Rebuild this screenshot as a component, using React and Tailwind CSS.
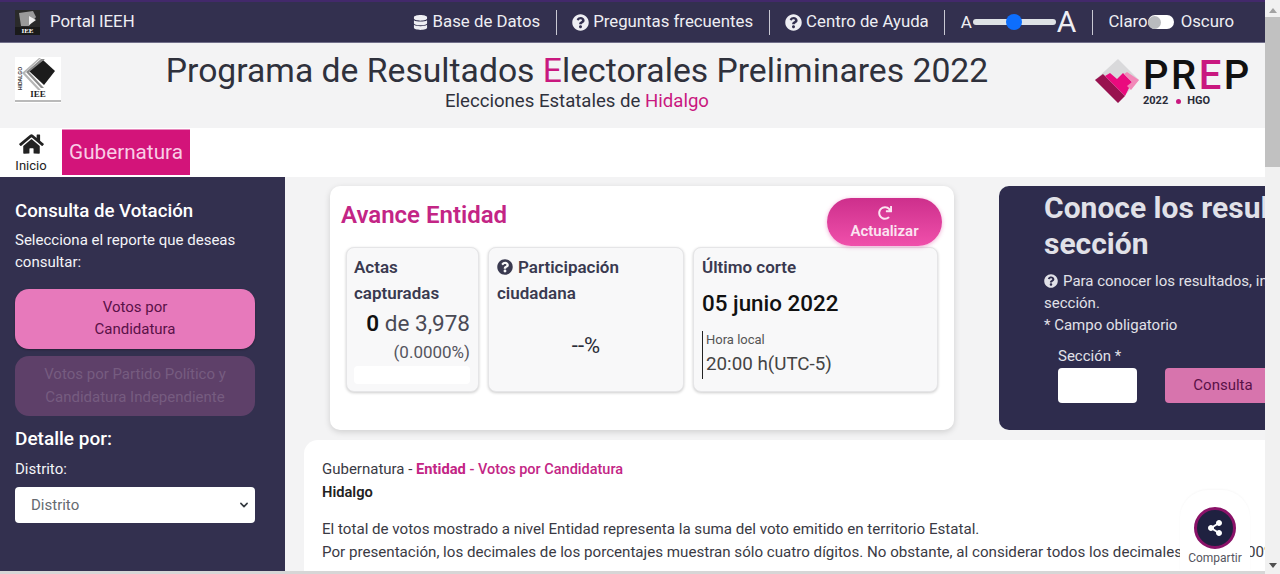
import React from "react";
import { FaDatabase, FaQuestionCircle, FaHome, FaShareAlt, FaRedo } from "react-icons/fa";

const Sep = () => <span className="w-px h-[25px] bg-[#c9c8d3] mx-[15.5px]" />;

const StatBox = ({ className, children }) => (
  <div className={`bg-[#f8f8f9] border border-[#e5e5e7] rounded-lg shadow-[0_1px_3px_rgba(0,0,0,0.2)] h-[145px] pt-[6px] ${className}`}>
    {children}
  </div>
);

const IeeLogo = ({ className }) => (
  <svg viewBox="0 0 46 46" className={className}>
    <rect width="46" height="46" fill="#ffffff" />
    <path d="M14 14 L28 3 L40 14 L29 28 Z" fill="#1c1c1c" />
    <path d="M11 15 L26 2 L30 2 L14 15 L29 31 L26 31 Z" fill="#8a8a8a" />
    <path d="M7 16 L24 1 L26 1 L10 16 L26 33 L23 33 Z" fill="#b5b5b5" />
    <rect x="10" y="33" width="30" height="8" fill="#ffffff" />
    <text x="23" y="40" textAnchor="middle" fontSize="9" fontWeight="700" fontFamily="Liberation Serif, serif" fill="#222222">IEE</text>
    <text x="0" y="0" transform="translate(7 33) rotate(-90)" fontSize="5" fontWeight="700" fontFamily="Liberation Sans, sans-serif" fill="#333333">HIDALGO</text>
    <rect x="0" y="43.5" width="46" height="1" fill="#777777" />
  </svg>
);

const TopNav = () => (
  <div className="h-[43px] shrink-0 bg-[#33304f] border-t-2 border-t-[#43296b] border-b border-b-[#716f8a] flex items-center pl-[15px] text-[#eeeef3] text-[16.8px]">
    <div className="w-[25px] h-[25px] bg-[#1a1a1a] flex flex-col items-center justify-end overflow-hidden">
      <svg viewBox="0 0 25 17" className="w-[25px] h-[17px]">
        <rect width="25" height="17" fill="#2a2a2a" />
        <path d="M4 3 L18 1 L21 7 L14 16 L6 16 Z" fill="#9a9a9a" />
        <path d="M14 6 L21 10 L14 15 Z" fill="#eeeeee" />
      </svg>
      <span className="text-[7px] leading-[8px] font-bold text-white font-['Liberation_Serif',serif]">IEE</span>
    </div>
    <span className="ml-[10px]">Portal IEEH</span>
    <div className="ml-auto flex items-center pr-[31px]">
      <FaDatabase className="text-[15px] mr-[5px]" />
      <span>Base de Datos</span>
      <Sep />
      <FaQuestionCircle className="text-[17px] mr-[4px]" />
      <span>Preguntas frecuentes</span>
      <Sep />
      <FaQuestionCircle className="text-[17px] mr-[4px]" />
      <span>Centro de Ayuda</span>
      <Sep />
      <span className="text-[17px] leading-none">A</span>
      <div className="relative w-[83px] h-[6px] mx-[1px] rounded-full bg-[#dee2e6]">
        <span className="absolute left-[33px] top-[-5px] w-[16px] h-[16px] rounded-full bg-[#0d6efd]" />
      </div>
      <span className="text-[30px] leading-none">A</span>
      <Sep />
      <span>Claro</span>
      <div className="w-[26px] h-[14px] rounded-full bg-white flex items-center">
        <span className="w-[13px] h-[13px] rounded-full bg-[#b9bbbe]" />
      </div>
      <span className="ml-[7px]">Oscuro</span>
    </div>
  </div>
);

const Header = () => (
  <div className="h-[85px] shrink-0 bg-[#f3f3f4] flex items-start">
    <IeeLogo className="w-[46px] h-[46px] ml-[15px] mt-[14px] shrink-0" />
    <div className="ml-[104px] w-[824px] text-center text-[#2f313c]">
      <div className="text-[33.7px] leading-[39px] mt-[8px] whitespace-nowrap">
        Programa de Resultados <span className="text-[#c9187f]">E</span>lectorales Preliminares 2022
      </div>
      <div className="text-[18.6px] leading-[22px]">
        Elecciones Estatales de <span className="text-[#c9187f]">Hidalgo</span>
      </div>
    </div>
    <div className="ml-[105px] mt-[15px] flex items-start">
      <svg viewBox="0 0 46 46" className="w-[46px] h-[46px]">
        <path d="M24 1 L45 22 L24 45 L1 22 Z" fill="#d9d9db" />
        <path d="M1 22 L9 16 L31 38 L24 45 Z" fill="#98114f" />
        <path d="M11 18 L16 15 L23 21 L29 15 L38 24 L31 38 Z" fill="#ea0a7e" />
        <path d="M33 14 L45 22 L37 32 L33 28 L38 24 L30 16 Z" fill="#f288b8" />
      </svg>
      <div className="ml-[3px]">
        <div className="text-[40px] leading-[36px] font-medium tracking-[2.5px] text-[#111111] whitespace-nowrap">
          PR<span className="text-[#c9187f]">E</span>P
        </div>
        <div className="text-[11px] leading-[10px] font-bold text-[#2a2c38] flex items-center mt-[2px]">
          <span>2022</span>
          <span className="w-[5px] h-[5px] rounded-full bg-[#c9187f] ml-[8px] mr-[6px]" />
          <span>HGO</span>
        </div>
      </div>
    </div>
  </div>
);

const Tabs = () => (
  <div className="h-[49px] shrink-0 bg-white flex items-start">
    <div className="w-[62px] flex flex-col items-center pt-[5px] text-[#222222]">
      <FaHome className="text-[27px] leading-none h-[22px]" />
      <span className="text-[13px] leading-[15px] mt-[3px]">Inicio</span>
    </div>
    <div className="w-[128px] h-[46px] mt-[1px] bg-[#d3147a] border-t border-t-[#e889bd] text-[#f9cde6] text-[20.7px] flex items-center justify-center">
      Gubernatura
    </div>
  </div>
);

const Sidebar = () => (
  <aside className="w-[285px] shrink-0 bg-[#33304f] px-[15px] pt-[21px] text-white">
    <h2 className="text-[18.7px] leading-[26px] font-medium">Consulta de Votación</h2>
    <p className="text-[15px] leading-[22px] mt-[5px] text-[#f4f4f8]">
      Selecciona el reporte que deseas consultar:
    </p>
    <button className="mt-[16px] w-[240px] h-[60px] pb-[2px] rounded-[14px] bg-[#e779bb] text-[#5a1148] text-[15px] leading-[22.5px] shadow-[0_1px_2px_rgba(0,0,0,0.3)]">
      Votos por
      <br />
      Candidatura
    </button>
    <button className="mt-[7px] w-[240px] h-[60px] pb-[1px] rounded-[14px] bg-[#5e4069] text-[#765c80] text-[15px] leading-[22.5px]">
      Votos por Partido Político y
      <br />
      Candidatura Independiente
    </button>
    <h2 className="text-[19px] leading-[26px] font-medium mt-[10px]">Detalle por:</h2>
    <p className="text-[15px] leading-[22px] mt-[6px] text-[#f4f4f8]">Distrito:</p>
    <div className="mt-[7px] w-[240px] h-[36px] rounded bg-white flex items-center pl-[16px] pr-[6px] text-[#666a70] text-[15px]">
      <span>Distrito</span>
      <svg viewBox="0 0 16 16" className="ml-auto w-[10px] h-[10px]">
        <path d="M3 5.5 L8 10.5 L13 5.5" fill="none" stroke="#343a40" strokeWidth="2.6" strokeLinecap="round" strokeLinejoin="round" />
      </svg>
    </div>
  </aside>
);

const AvanceCard = () => (
  <section className="relative w-[624px] h-[244px] shrink-0 bg-white rounded-[10px] shadow-[0_2px_6px_rgba(0,0,0,0.15)] px-[11px] pt-[14px]">
    <h2 className="text-[24px] leading-[30px] font-semibold text-[#c32585]">Avance Entidad</h2>
    <button className="absolute right-[12px] top-[12px] w-[115px] h-[48px] rounded-full bg-gradient-to-b from-[#cd2f8c] to-[#f04fab] text-[#fbe4f1] text-[15px] font-semibold leading-[16px] flex flex-col items-center justify-center shadow-[0_1px_4px_rgba(220,50,150,0.4)]">
      <FaRedo className="text-[14px] mb-[3px]" />
      Actualizar
    </button>
    <div className="flex gap-[9px] ml-[5px] mt-[17px]">
      <StatBox className="w-[133px] pl-[7px] pr-[8px]">
        <div className="text-[#3a3a50] text-[17px] leading-[26px] font-semibold">Actas capturadas</div>
        <div className="text-right text-[22.5px] leading-[28px] text-[#4a4a55] mt-[3px]">
          <span className="font-semibold text-[#111111]">0</span> de 3,978
        </div>
        <div className="text-right text-[17px] leading-[24px] text-[#55555e] mt-[3px]">(0.0000%)</div>
        <div className="h-[18px] mt-[2px] bg-white rounded-sm" />
      </StatBox>
      <StatBox className="w-[196px] px-[8px]">
        <div className="text-[#3a3a50] text-[17px] leading-[26px] font-semibold">
          <FaQuestionCircle className="inline text-[16px] mr-[5px] align-[-2px]" />
          Participación ciudadana
        </div>
        <div className="text-center text-[22px] leading-[28px] text-[#2a2c38] mt-[26px]">--%</div>
      </StatBox>
      <StatBox className="w-[245px] px-[8px]">
        <div className="text-[#3a3a50] text-[17px] leading-[26px] font-semibold">Último corte</div>
        <div className="text-[#111111] text-[22.4px] leading-[28px] font-medium mt-[9px]">05 junio 2022</div>
        <div className="border-l border-l-[#222222] mt-[14px] pl-[3px] h-[48px]">
          <div className="text-[13px] leading-[18px] text-[#555555]">Hora local</div>
          <div className="text-[18.8px] leading-[26px] text-[#444444] mt-[2px]">20:00 h(UTC-5)</div>
        </div>
      </StatBox>
    </div>
  </section>
);

const SeccionCard = () => (
  <section className="w-[520px] h-[244px] shrink-0 ml-[45px] bg-[#2e2c4d] rounded-[10px] pl-[45px] pt-[4px] text-[#e1e1e8]">
    <h2 className="text-[30px] leading-[36px] font-bold w-[440px]">Conoce los resultados por sección</h2>
    <p className="text-[15px] leading-[22px] mt-[8px]">
      <FaQuestionCircle className="inline text-[14px] mr-[5px] align-[-2px]" />
      Para conocer los resultados, ingresa el número de
      <br />
      sección.
    </p>
    <p className="text-[15px] leading-[22px]">* Campo obligatorio</p>
    <div className="flex items-end ml-[14px] mt-[10px]">
      <div>
        <div className="text-[15px] leading-[20px] mb-[2px]">Sección *</div>
        <div className="w-[79px] h-[35px] bg-white rounded-sm" />
      </div>
      <button className="ml-[28px] w-[116px] h-[35px] rounded-sm bg-[#d774ad] text-[#5a1148] text-[15px]">
        Consulta
      </button>
    </div>
  </section>
);

const Detalle = () => (
  <section className="mt-[10px] ml-[19px] w-[1000px] bg-white rounded-t-[14px] pl-[18px] pt-[18px] h-[200px] text-[15.13px] leading-[22.5px] text-[#3a3a44]">
    <div className="text-[14.7px] leading-[22px]">
      <span className="text-[15px]">Gubernatura - </span>
      <span className="font-bold text-[#c32585]">Entidad</span>
      <span className="text-[14.5px] text-[#c32585] font-medium"> - Votos por Candidatura</span>
    </div>
    <div className="text-[14.7px] leading-[22px] font-semibold text-[#222222]">Hidalgo</div>
    <p className="mt-[15px]">El total de votos mostrado a nivel Entidad representa la suma del voto emitido en territorio Estatal.</p>
    <p className="whitespace-nowrap">
      Por presentación, los decimales de los porcentajes muestran sólo cuatro dígitos. No obstante, al considerar todos los decimales, suman 100%.
    </p>
  </section>
);

const Compartir = () => (
  <div className="absolute right-[15px] bottom-[3px] w-[70px] h-[81px] bg-white rounded-t-[28px] shadow-[0_-1px_2px_rgba(0,0,0,0.03)] flex flex-col items-center pt-[17px]">
    <div className="w-[42px] h-[42px] rounded-full bg-[#1f2140] border-[3px] border-[#8a1268] flex items-center justify-center">
      <FaShareAlt className="text-white text-[16px]" />
    </div>
    <span className="text-[12px] leading-[14px] mt-[2px] text-[#555560]">Compartir</span>
  </div>
);

const Scrollbar = () => (
  <div className="w-[15px] shrink-0 bg-[#f1f1f1] flex flex-col items-center">
    <svg viewBox="0 0 10 6" className="w-[8px] h-[5px] mt-[8px]">
      <path d="M0 6 L5 0 L10 6 Z" fill="#a3a3a3" />
    </svg>
    <div className="w-[15px] h-[150px] mt-[4px] bg-[#c1c1c1]" />
    <svg viewBox="0 0 10 6" className="w-[8px] h-[5px] mt-auto mb-[6px]">
      <path d="M0 0 L5 6 L10 0 Z" fill="#505050" />
    </svg>
  </div>
);

export default function App() {
  return (
    <div className="w-[1280px] h-[574px] flex overflow-hidden font-['Roboto',sans-serif]">
      <div className="relative w-[1265px] h-[574px] flex flex-col overflow-hidden">
        <TopNav />
        <Header />
        <Tabs />
        <div className="flex flex-1 min-h-0 bg-[#f3f3f4]">
          <Sidebar />
          <main className="flex-1 min-w-0 pt-[9px] overflow-hidden">
            <div className="flex pl-[45px]">
              <AvanceCard />
              <SeccionCard />
            </div>
            <Detalle />
          </main>
        </div>
        <div className="h-[3px] shrink-0 bg-[#d6d6d6]" />
        <Compartir />
      </div>
      <Scrollbar />
    </div>
  );
}
